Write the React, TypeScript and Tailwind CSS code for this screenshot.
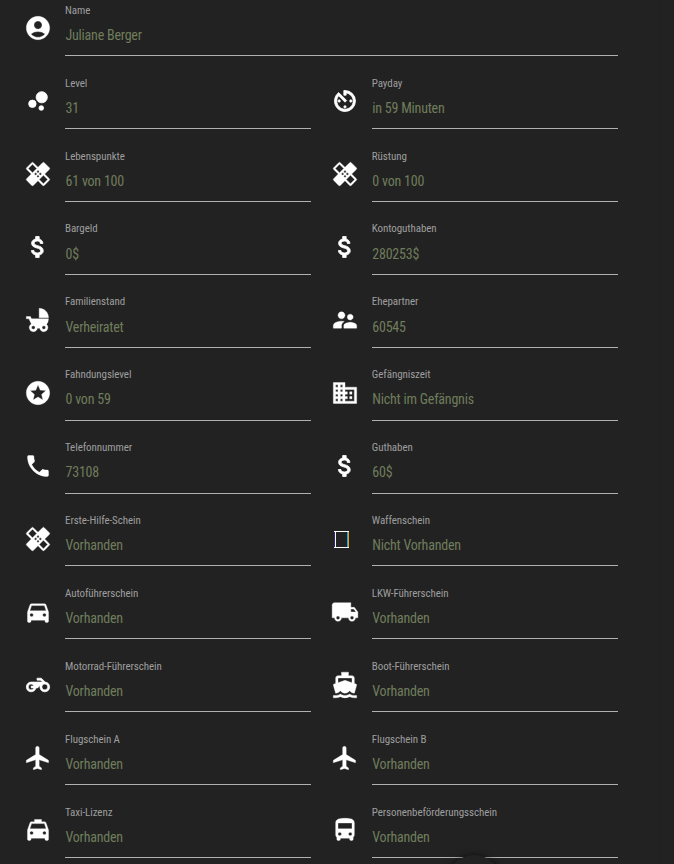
import type { IconType } from 'react-icons'
import {
  MdAccountCircle,
  MdAttachMoney,
  MdAvTimer,
  MdBubbleChart,
  MdBusiness,
  MdChildFriendly,
  MdDirectionsBoat,
  MdDirectionsBus,
  MdDirectionsCar,
  MdFlight,
  MdHealing,
  MdLocalShipping,
  MdLocalTaxi,
  MdPhone,
  MdStars,
  MdSupervisorAccount,
} from 'react-icons/md'

type Field = {
  label: string
  value: string
  icon?: IconType
  wide?: boolean
  bold?: boolean
}

const MotorcycleIcon: IconType = ({ size, className }) => (
  <svg viewBox="-2.4 -2.4 28.8 28.8" width={size} height={size} fill="currentColor" stroke="currentColor" strokeWidth="0" className={className}>
    <path d="M19.44 9.03L15.41 5H11v2h3.59l2 2H5c-2.8 0-5 2.2-5 5s2.2 5 5 5c2.46 0 4.45-1.69 4.9-4h1.65l2.77-2.77c-.21.54-.32 1.14-.32 1.77 0 2.8 2.2 5 5 5s5-2.2 5-5c0-2.65-1.97-4.77-4.56-4.97zM7.82 15C7.4 16.15 6.28 17 5 17c-1.63 0-3-1.37-3-3s1.37-3 3-3c1.28 0 2.4.85 2.82 2H5v2h2.82zM19 17c-1.66 0-3-1.34-3-3s1.34-3 3-3 3 1.34 3 3-1.34 3-3 3z" />
  </svg>
)

const fields: Field[] = [
  { label: 'Name', value: 'Juliane Berger', icon: MdAccountCircle, wide: true },
  { label: 'Level', value: '31', icon: MdBubbleChart, bold: true },
  { label: 'Payday', value: 'in 59 Minuten', icon: MdAvTimer, bold: true },
  { label: 'Lebenspunkte', value: '61 von 100', icon: MdHealing },
  { label: 'Rüstung', value: '0 von 100', icon: MdHealing },
  { label: 'Bargeld', value: '0$', icon: MdAttachMoney, bold: true },
  { label: 'Kontoguthaben', value: '280253$', icon: MdAttachMoney, bold: true },
  { label: 'Familienstand', value: 'Verheiratet', icon: MdChildFriendly },
  { label: 'Ehepartner', value: '60545', icon: MdSupervisorAccount },
  { label: 'Fahndungslevel', value: '0 von 59', icon: MdStars },
  { label: 'Gefängniszeit', value: 'Nicht im Gefängnis', icon: MdBusiness },
  { label: 'Telefonnummer', value: '73108', icon: MdPhone },
  { label: 'Guthaben', value: '60$', icon: MdAttachMoney, bold: true },
  { label: 'Erste-Hilfe-Schein', value: 'Vorhanden', icon: MdHealing },
  { label: 'Waffenschein', value: 'Nicht Vorhanden' },
  { label: 'Autoführerschein', value: 'Vorhanden', icon: MdDirectionsCar },
  { label: 'LKW-Führerschein', value: 'Vorhanden', icon: MdLocalShipping },
  { label: 'Motorrad-Führerschein', value: 'Vorhanden', icon: MotorcycleIcon, bold: true },
  { label: 'Boot-Führerschein', value: 'Vorhanden', icon: MdDirectionsBoat },
  { label: 'Flugschein A', value: 'Vorhanden', icon: MdFlight },
  { label: 'Flugschein B', value: 'Vorhanden', icon: MdFlight },
  { label: 'Taxi-Lizenz', value: 'Vorhanden', icon: MdLocalTaxi },
  { label: 'Personenbeförderungsschein', value: 'Vorhanden', icon: MdDirectionsBus },
]

function ProfileField({ label, value, icon: Icon, wide, bold }: Field) {
  return (
    <div className={`flex h-[72.91px] ${wide ? 'col-span-2' : ''}`}>
      <div className="w-[41px] shrink-0 pt-[31.3px] pl-[0.3px]">
        {Icon ? (
          <Icon
            size={28}
            className={`text-white [&>[fill=none]]:stroke-none ${bold ? 'stroke-[0.7]' : 'stroke-[0.3]'}`}
          />
        ) : (
          // No glyph for this one, just the empty box
          <div className="mt-[6px] ml-[3px] h-[17px] w-[15px] border-y border-white">
            <div className="h-full border-r border-l border-r-[#d9a520] border-l-[#2222a0]">
              <div className="h-full border-r border-l border-r-[#2aa5d8] border-l-[#fffbd0]" />
            </div>
          </div>
        )}
      </div>
      <div className="flex-1 border-b border-[#b0b0b0] pt-[19.56px] whitespace-nowrap">
        <div className="h-[16px] text-[11px] leading-[16px] tracking-[-0.08px] text-[#9e9e9e]">{label}</div>
        <div className="mt-[6.18px] pl-[0.5px] text-[14px] leading-[20px] tracking-[-0.22px] text-[#6f7d5c]">{value}</div>
      </div>
    </div>
  )
}

export default function App() {
  return (
    <div className="relative flex h-[864px] w-[674px] overflow-hidden bg-[#222222] font-['Roboto_Condensed','Roboto',sans-serif] [font-stretch:75%]">
      <div className="w-[660px] shrink-0 border-r border-[#1f1f1f] pl-6">
        <div className="-mt-[16.82px] grid w-[594px] grid-cols-[287px_287px] gap-x-[19.8px]">
          {fields.map(f => (
            <ProfileField key={f.label} {...f} />
          ))}
        </div>
      </div>

      {/* Floating button peeking in from below */}
      <div className="absolute top-[855px] left-[446px] h-[56px] w-[56px] rounded-full bg-[#222222] shadow-[0_0_6px_rgba(0,0,0,0.6)]" />
    </div>
  )
}
